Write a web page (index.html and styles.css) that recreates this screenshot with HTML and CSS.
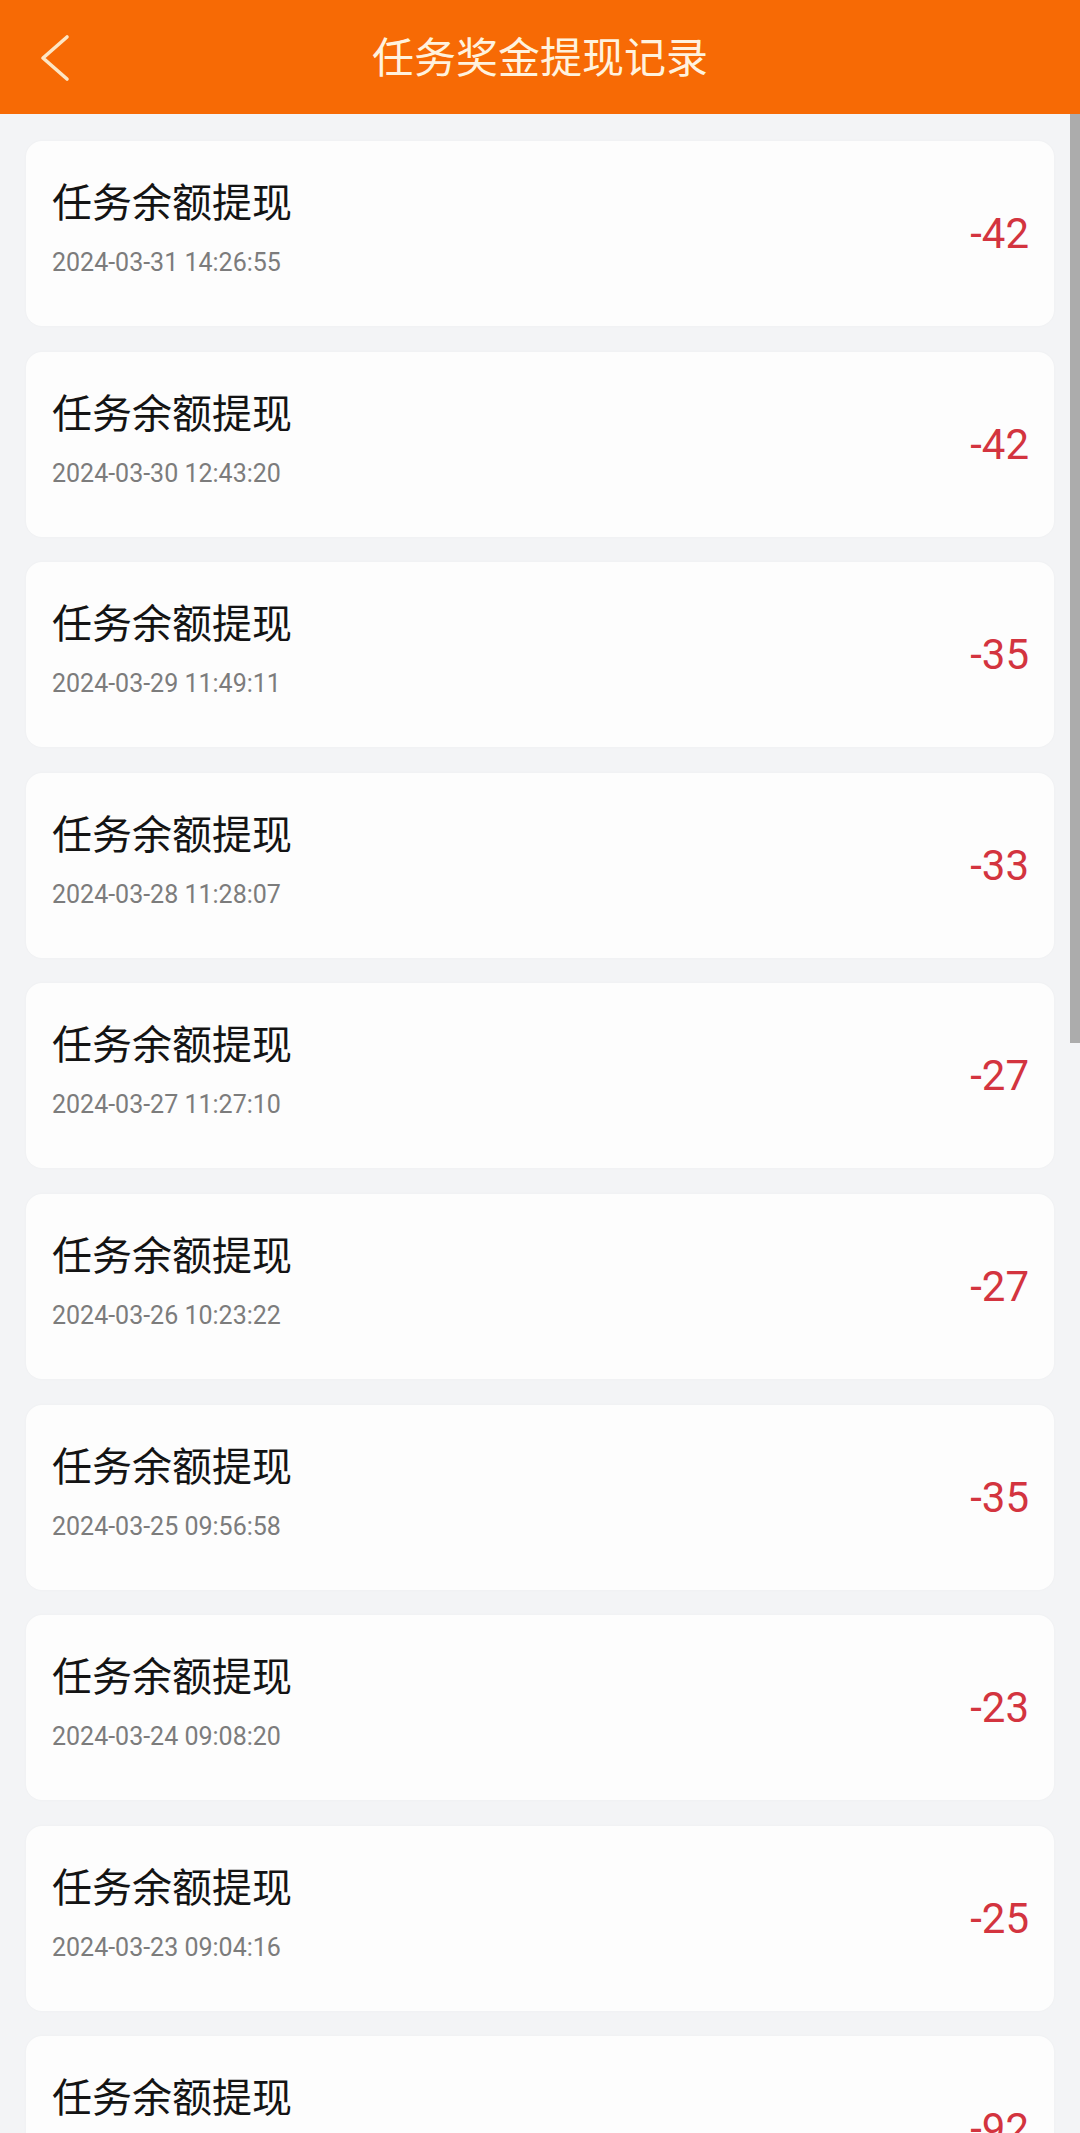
FILE: index.html
```html
<!DOCTYPE html>
<html>
<head>
    <meta charset="utf-8">
    <title>任务奖金提现记录</title>
    <link rel="stylesheet" href="styles.css">
</head>
<body>
    <div class="app">
        <!-- Header -->
        <header class="topbar">
            <div class="back">
                <svg width="30" height="50" viewBox="0 0 30 50">
                    <polyline points="27,4 3,25 27,46" fill="none" stroke="#fde6c4" stroke-width="3.6" stroke-linecap="round" stroke-linejoin="round"/>
                </svg>
            </div>
            <h1 class="title">任务奖金提现记录</h1>
            <div></div>
        </header>

        <!-- List -->
        <main class="list">
            <div class="record">
                <div class="info">
                    <div class="name">任务余额提现</div>
                    <div class="time">2024-03-31 14:26:55</div>
                </div>
                <div class="amount">-42</div>
            </div>
            <div class="record">
                <div class="info">
                    <div class="name">任务余额提现</div>
                    <div class="time">2024-03-30 12:43:20</div>
                </div>
                <div class="amount">-42</div>
            </div>
            <div class="record">
                <div class="info">
                    <div class="name">任务余额提现</div>
                    <div class="time">2024-03-29 11:49:11</div>
                </div>
                <div class="amount">-35</div>
            </div>
            <div class="record">
                <div class="info">
                    <div class="name">任务余额提现</div>
                    <div class="time">2024-03-28 11:28:07</div>
                </div>
                <div class="amount">-33</div>
            </div>
            <div class="record">
                <div class="info">
                    <div class="name">任务余额提现</div>
                    <div class="time">2024-03-27 11:27:10</div>
                </div>
                <div class="amount">-27</div>
            </div>
            <div class="record">
                <div class="info">
                    <div class="name">任务余额提现</div>
                    <div class="time">2024-03-26 10:23:22</div>
                </div>
                <div class="amount">-27</div>
            </div>
            <div class="record">
                <div class="info">
                    <div class="name">任务余额提现</div>
                    <div class="time">2024-03-25 09:56:58</div>
                </div>
                <div class="amount">-35</div>
            </div>
            <div class="record">
                <div class="info">
                    <div class="name">任务余额提现</div>
                    <div class="time">2024-03-24 09:08:20</div>
                </div>
                <div class="amount">-23</div>
            </div>
            <div class="record">
                <div class="info">
                    <div class="name">任务余额提现</div>
                    <div class="time">2024-03-23 09:04:16</div>
                </div>
                <div class="amount">-25</div>
            </div>
            <div class="record">
                <div class="info">
                    <div class="name">任务余额提现</div>
                    <div class="time">2024-03-22 09:12:40</div>
                </div>
                <div class="amount">-92</div>
            </div>
        </main>

        <!-- scroll indicator -->
        <div class="scroll-thumb"></div>
    </div>
</body>
</html>
```

FILE: styles.css
```css
html, body {
    margin: 0;
    padding: 0;
    height: 100%;
    overflow: hidden;
}

body {
    font-family: Roboto, "Noto Sans CJK SC", sans-serif;
    background-color: #f3f4f6;
}

.app {
    position: relative;
    height: 2133px;
    overflow: hidden;
}

/* Header */
.topbar {
    height: 114px;
    background-color: #f76a05;
    display: grid;
    grid-template-columns: 1fr auto 1fr;
    align-items: center;
}

.back {
    padding-left: 40px;
    height: 50px;
    padding-top: 2px;
}

.back svg {
    display: block;
}

.title {
    margin: 0 0 4px;
    font-family: "Noto Sans CJK SC", sans-serif;
    font-size: 42px;
    font-weight: 400;
    color: #fff2de;
    line-height: 1;
}

/* List */
.list {
    padding: 27px 26px 0;
}

.record {
    height: 185px;
    margin-bottom: 25.6px;
    background-color: #fdfdfd;
    border-radius: 16px;
    box-shadow: 0 0 3px rgba(0, 0, 0, 0.03);
    display: flex;
    justify-content: space-between;
    padding: 0 25px 0 26px;
}

.info {
    padding-top: 35px;
}

.name {
    font-family: "Noto Sans CJK SC", sans-serif;
    font-size: 40px;
    line-height: 48px;
    color: #141414;
}

.time {
    margin-top: 23px;
    font-size: 25px;
    line-height: 32px;
    color: #7c7c7c;
}

.amount {
    align-self: center;
    font-size: 42px;
    color: #d3343f;
}

.scroll-thumb {
    position: absolute;
    right: 0;
    top: 114px;
    width: 10px;
    height: 929px;
    background-color: #acacac;
}
```
